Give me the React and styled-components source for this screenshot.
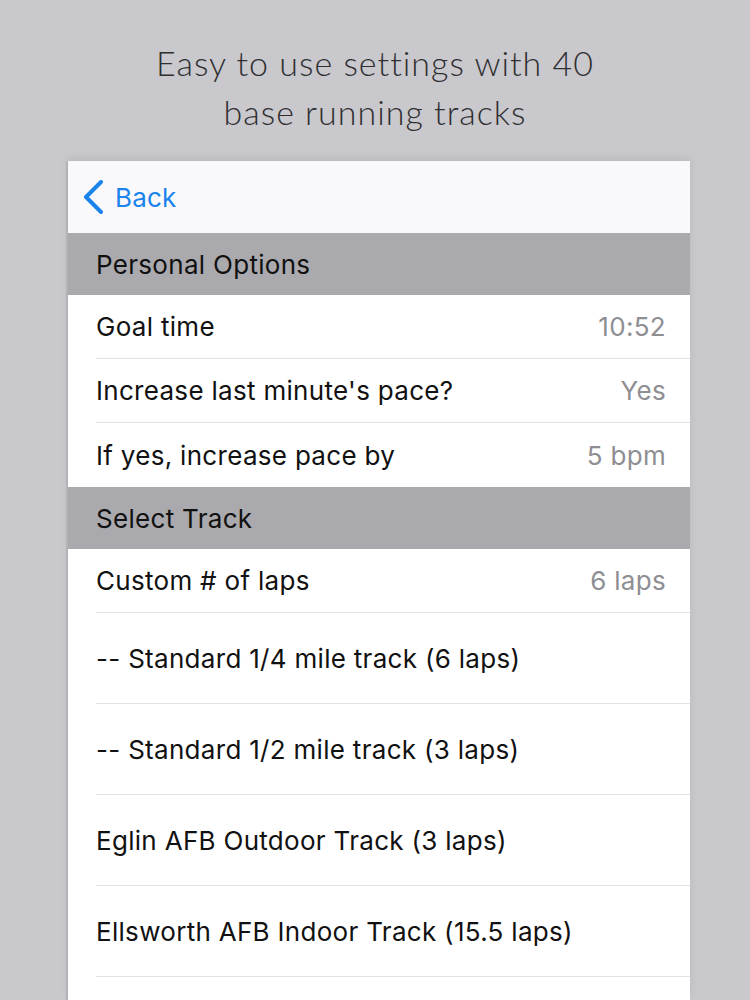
import React from "react";
import styled, { createGlobalStyle } from "styled-components";

const Global = createGlobalStyle`
  html, body { margin: 0; padding: 0; }
  body { background: #c9c8cc; font-family: Inter, "Liberation Sans", sans-serif; }
`;

const Page = styled.div`
  width: 750px;
  height: 1000px;
  overflow: hidden;
  background: #c9c8cc;
  display: flex;
  flex-direction: column;
`;

const Title = styled.h1`
  margin: 0;
  padding-top: 38px;
  text-align: center;
  font-family: Lato, "Open Sans", sans-serif;
  font-weight: 300;
  font-size: 34px;
  line-height: 49px;
  color: #2f2f31;
  letter-spacing: 1px;
`;

const Screen = styled.div`
  margin-top: 25px;
  margin-left: 68px;
  width: 622px;
  flex: 1;
  background: #ffffff;
  box-shadow: -2px 0 0 #b3b2b6, 0 -3px 8px rgba(0, 0, 0, 0.08);
  display: flex;
  flex-direction: column;
`;

const NavBar = styled.div`
  height: 72px;
  background: #f9f9fb;
  display: flex;
  align-items: center;
  padding-left: 14px;
  gap: 11px;
  color: #1a84ec;
  font-size: 26px;
  letter-spacing: 0.2px;
`;

const SectionHeader = styled.div`
  height: 62px;
  background: #aaa9ad;
  display: flex;
  align-items: center;
  padding-left: 28px;
  font-size: 26px;
  color: #111;
  letter-spacing: 0.3px;
`;

const Row = styled.div`
  height: ${(p) => (p.$tall ? 91 : 64)}px;
  box-sizing: border-box;
  margin-left: 28px;
  padding-right: 24px;
  display: flex;
  align-items: center;
  justify-content: space-between;
  border-bottom: ${(p) => (p.$last ? "none" : "1.5px solid #e3e3e6")};
  font-size: 26px;
  letter-spacing: 0.3px;
`;

const Label = styled.span`
  color: #111;
`;

const Value = styled.span`
  color: #8e8e93;
`;

const Chevron = () => (
  <svg width="22" height="34" viewBox="0 0 22 34">
    <path d="M19 2 L4 17 L19 32" fill="none" stroke="#1a84ec" strokeWidth="4" strokeLinecap="round" strokeLinejoin="round" />
  </svg>
);

const personal = [
  ["Goal time", "10:52"],
  ["Increase last minute's pace?", "Yes"],
  ["If yes, increase pace by", "5 bpm"],
];

const tracks = [
  "-- Standard 1/4 mile track (6 laps)",
  "-- Standard 1/2 mile track (3 laps)",
  "Eglin AFB Outdoor Track (3 laps)",
  "Ellsworth AFB Indoor Track (15.5 laps)",
];

export default function App() {
  return (
    <>
      <Global />
      <Page>
        <Title>
          Easy to use settings with 40
          <br />
          base running tracks
        </Title>
        <Screen>
          <NavBar>
            <Chevron />
            <span>Back</span>
          </NavBar>
          <SectionHeader>Personal Options</SectionHeader>
          {personal.map(([l, v], i) => (
            <Row key={l} $last={i === personal.length - 1}>
              <Label>{l}</Label>
              <Value>{v}</Value>
            </Row>
          ))}
          <SectionHeader>Select Track</SectionHeader>
          <Row>
            <Label>Custom # of laps</Label>
            <Value>6 laps</Value>
          </Row>
          {tracks.map((t) => (
            <Row key={t} $tall>
              <Label>{t}</Label>
            </Row>
          ))}
        </Screen>
      </Page>
    </>
  );
}
